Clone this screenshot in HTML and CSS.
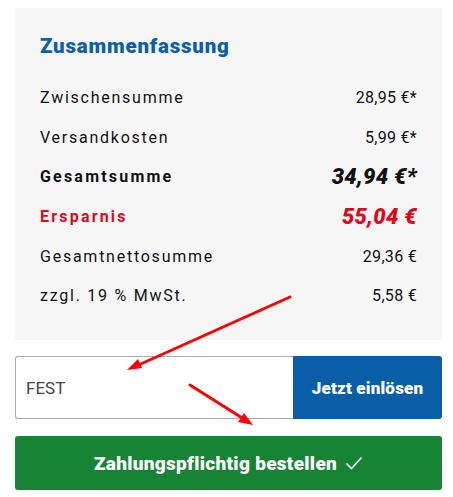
FILE: index.html
```html
<!DOCTYPE html>
<html lang="de">
<head>
<meta charset="utf-8">
<link rel="stylesheet" href="styles.css">
</head>
<body>
<div class="page">
  <section class="summary">
    <h2 class="title">Zusammenfassung</h2>
    <div class="row"><span class="label">Zwischensumme</span><span class="value">28,95 €*</span></div>
    <div class="row"><span class="label">Versandkosten</span><span class="value">5,99 €*</span></div>
    <div class="row total"><span class="label">Gesamtsumme</span><span class="value">34,94 €*</span></div>
    <div class="row saving"><span class="label">Ersparnis</span><span class="value">55,04 €</span></div>
    <div class="row"><span class="label">Gesamtnettosumme</span><span class="value">29,36 €</span></div>
    <div class="row"><span class="label">zzgl. 19 % MwSt.</span><span class="value">5,58 €</span></div>
  </section>
  <form class="voucher">
    <input class="voucher-input" type="text" value="FEST">
    <button class="voucher-btn" type="button">Jetzt einlösen</button>
  </form>
  <button class="order-btn" type="button">Zahlungspflichtig bestellen
    <svg class="check" width="18" height="14" viewBox="0 0 18 14"><path d="M1.5 7.5 L6.5 12.5 L16.5 1.5" fill="none" stroke="#fff" stroke-width="1.6"/></svg>
  </button>
  <svg class="arrows" width="453" height="497" viewBox="0 0 453 497">
    <g stroke="#f00" stroke-width="3" stroke-linecap="round" fill="none">
      <line x1="290" y1="297" x2="134" y2="367"/>
      <line x1="190" y1="385" x2="247" y2="421"/>
    </g>
    <g fill="#f00">
      <polygon points="127,370 138,359 142,368"/>
      <polygon points="253,425 238,422 244,413"/>
    </g>
  </svg>
</div>
</body>
</html>
```
FILE: styles.css
```css
html, body {
  margin: 0;
  padding: 0;
  background: #fff;
}
body {
  font-family: Roboto, "Noto Sans", Arial, sans-serif;
  color: #111;
}
.page {
  position: relative;
  width: 427px;
  padding: 8px 11px 0 15px;
}
.summary {
  background: #f6f6f6;
  padding: 27px 25px 19px 25px;
  height: 286px;
}
.title {
  margin: 0 0 20px 0;
  font-size: 20.5px;
  font-weight: 900;
  color: #0b5ea8;
  line-height: 23px;
  letter-spacing: 0.8px;
}
.row {
  display: flex;
  justify-content: space-between;
  align-items: center;
  height: 39.6px;
  font-size: 16px;
}
.label {
  letter-spacing: 1.75px;
}
.value {
  letter-spacing: 0.3px;
}
.total .label {
  font-weight: 700;
  letter-spacing: 2.2px;
}
.total .value {
  font-weight: 900;
  font-style: italic;
  font-size: 22px;
}
.saving .label {
  font-weight: 700;
  letter-spacing: 2.2px;
  color: #e2061a;
}
.saving .value {
  font-weight: 900;
  font-style: italic;
  font-size: 22px;
  color: #e2061a;
}
.voucher {
  display: flex;
  margin: 16px 0 0 0;
  height: 63px;
}
.voucher-input {
  flex: 1;
  box-sizing: border-box;
  border: 1px solid #a9a9a9;
  border-right: none;
  border-radius: 3px 0 0 3px;
  padding: 0 0 0 10px;
  font-family: Roboto, "Noto Sans", Arial, sans-serif;
  font-size: 17px;
  color: #444;
  outline: none;
  min-width: 0;
}
.voucher-btn {
  width: 149px;
  border: none;
  border-radius: 0 3px 3px 0;
  background: #0a5ea7;
  color: #fff;
  font-family: Roboto, "Noto Sans", Arial, sans-serif;
  font-weight: 900;
  font-size: 17px;
  letter-spacing: 0.2px;
}
.order-btn {
  display: flex;
  justify-content: center;
  align-items: center;
  gap: 8px;
  width: 100%;
  height: 54px;
  margin-top: 17px;
  border: none;
  border-radius: 3px;
  background: #178335;
  color: #fff;
  font-family: Roboto, "Noto Sans", Arial, sans-serif;
  font-weight: 900;
  font-size: 19px;
  letter-spacing: 0.3px;
}
.check {
  display: block;
}
.arrows {
  position: absolute;
  left: 0;
  top: 0;
  pointer-events: none;
}
```
